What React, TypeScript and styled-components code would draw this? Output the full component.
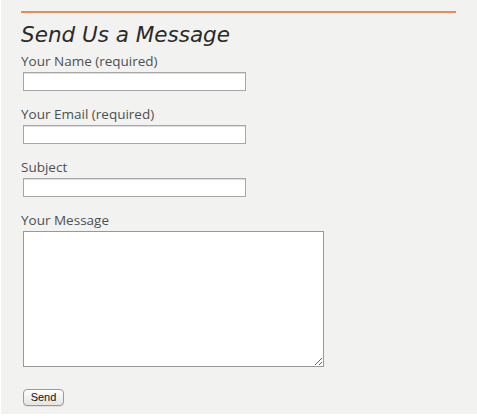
import React from "react";
import styled, { createGlobalStyle } from "styled-components";

const GlobalStyle = createGlobalStyle`
  html, body { margin: 0; padding: 0; background: #ffffff; }
  body { font-family: "Open Sans", "DejaVu Sans", sans-serif; }
`;

const Panel = styled.div`
  margin-left: 1px;
  width: 476px;
  height: 414px;
  box-sizing: border-box;
  background: #f2f2f0;
  padding: 11px 21px 0 20px;
`;

const Rule = styled.hr`
  margin: 0;
  border: 0;
  height: 2px;
  width: 435px;
  background: #e98a5a;
`;

const Title = styled.h2`
  margin: 6px 0 0;
  font-family: "DejaVu Sans", "Liberation Sans", sans-serif;
  font-style: italic;
  font-weight: normal;
  font-size: 21.5px;
  line-height: 32px;
  letter-spacing: 0;
  color: #2a2a2a;
`;

const Form = styled.form`
  display: flex;
  flex-direction: column;
  margin-top: 2px;
`;

const Field = styled.div`
  display: flex;
  flex-direction: column;
  align-items: flex-start;
  margin-bottom: 15px;
`;

const Label = styled.label`
  display: block;
  font-size: 13.5px;
  font-weight: 500;
  line-height: 17px;
  color: #4a5153;
  margin-bottom: 2px;
`;

const TextInput = styled.input`
  box-sizing: border-box;
  margin: 0 0 0 2px;
  width: 223px;
  height: 19px;
  padding: 1px 3px;
  border: 1px solid #a8a8a8;
  box-shadow: inset 0 1px 0 #dedede;
  background: #fff;
  font-size: 12px;
  outline: none;
`;

const MessageBox = styled.textarea`
  box-sizing: border-box;
  margin: 0 0 0 2px;
  width: 301px;
  height: 136px;
  padding: 2px;
  border: 1px solid #999;
  background: #fff;
  font-size: 12px;
  outline: none;
`;

const SendButton = styled.button`
  align-self: flex-start;
  margin: 7px 0 0 2px;
  height: 17px;
  width: 41px;
  padding: 0;
  font-family: "Liberation Sans", "DejaVu Sans", sans-serif;
  font-size: 11px;
  line-height: 15px;
  color: #111;
  border: 1px solid #9a9a9a;
  border-radius: 4px;
  background: linear-gradient(#ffffff, #f1f1f1 50%, #e4e4e4);
  box-shadow: 0 1px 0 rgba(0, 0, 0, 0.08);
`;

export default function App() {
  return (
    <>
      <GlobalStyle />
      <Panel>
        <Rule />
        <Title>Send Us a Message</Title>
        <Form onSubmit={(e) => e.preventDefault()}>
          <Field>
            <Label htmlFor="your-name">Your Name (required)</Label>
            <TextInput id="your-name" type="text" />
          </Field>
          <Field>
            <Label htmlFor="your-email">Your Email (required)</Label>
            <TextInput id="your-email" type="text" />
          </Field>
          <Field>
            <Label htmlFor="your-subject">Subject</Label>
            <TextInput id="your-subject" type="text" />
          </Field>
          <Field>
            <Label htmlFor="your-message">Your Message</Label>
            <MessageBox id="your-message" />
          </Field>
          <SendButton type="submit">Send</SendButton>
        </Form>
      </Panel>
    </>
  );
}
